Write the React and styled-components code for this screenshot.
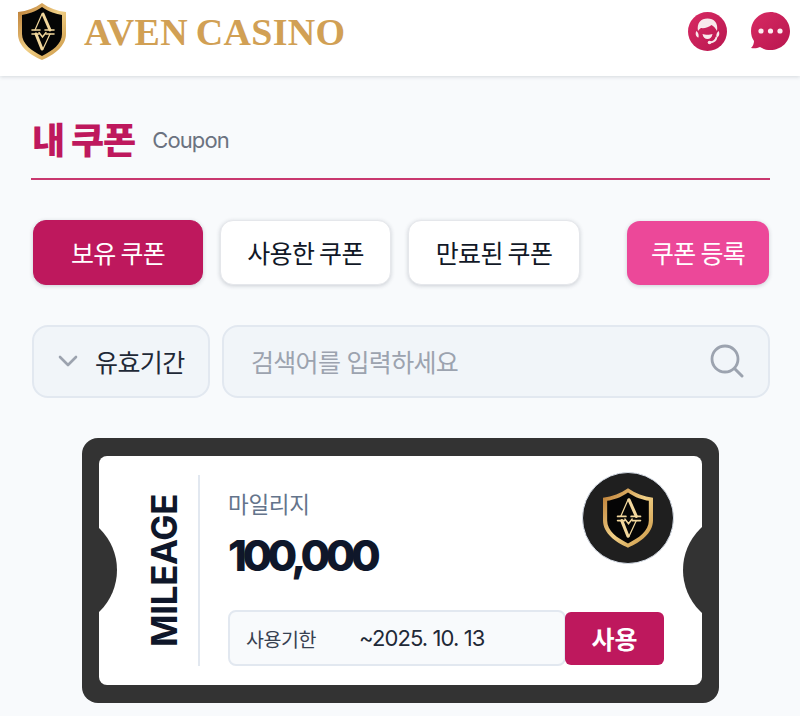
import React from 'react';
import styled, { createGlobalStyle } from 'styled-components';

const GlobalStyle = createGlobalStyle`
  html, body {
    margin: 0;
    padding: 0;
    background: #f8fafc;
    font-family: Inter, "Noto Sans CJK KR", sans-serif;
  }
  * { box-sizing: border-box; }
`;

const Page = styled.div`
  width: 800px;
  height: 716px;
  overflow: hidden;
  background: #f8fafc;
`;

const Header = styled.header`
  height: 76px;
  background: #fff;
  display: flex;
  align-items: center;
  padding: 0 10px 14px 18px;
  box-shadow: 0 1px 4px rgba(30, 41, 59, 0.16);
`;

const Brand = styled.div`
  display: flex;
  align-items: center;
  gap: 18px;
`;

const Wordmark = styled.span`
  font-family: "Liberation Serif", serif;
  font-weight: 700;
  font-size: 38px;
  line-height: 1;
  letter-spacing: 0.3px;
  word-spacing: -2px;
  color: #d1a054;
  padding-top: 2px;
`;

const HeaderActions = styled.div`
  margin-left: auto;
  display: flex;
  align-items: center;
  gap: 24px;
`;

const Main = styled.main`
  padding: 0 30px 0 31px;
`;

const TitleRow = styled.div`
  height: 104px;
  display: flex;
  align-items: flex-end;
  gap: 17px;
  padding: 0 0 14px 1px;
  border-bottom: 2px solid #c9386f;
`;

const Title = styled.h1`
  margin: 0;
  font-size: 36px;
  line-height: 46px;
  font-weight: 800;
  letter-spacing: -1px;
  color: #be185d;
`;

const Subtitle = styled.span`
  font-size: 22px;
  line-height: 48px;
  letter-spacing: -0.9px;
  color: #6b7280;
`;

const Tabs = styled.div`
  display: flex;
  align-items: center;
  gap: 17px;
  margin-top: 40px;
  padding: 0 1px 0 2px;
`;

const Tab = styled.button`
  width: ${(p) => p.$width}px;
  height: 65px;
  border-radius: 13px;
  border: 1px solid ${(p) => (p.$active ? '#be185d' : '#e5e7eb')};
  background: ${(p) => (p.$active ? '#be185d' : '#fff')};
  color: ${(p) => (p.$active ? '#fff' : '#111827')};
  font: 400 25px/1 "Noto Sans CJK KR", sans-serif;
  letter-spacing: -0.7px;
  box-shadow: 0 1px 4px rgba(30, 41, 59, 0.2);
`;

const RegisterButton = styled.button`
  margin-left: auto;
  width: 142px;
  height: 64px;
  border: 0;
  border-radius: 13px;
  background: #ec4899;
  color: #fff;
  font: 400 25px/1 "Noto Sans CJK KR", sans-serif;
  letter-spacing: -0.7px;
  box-shadow: 0 1px 4px rgba(30, 41, 59, 0.2);
`;

const Filters = styled.div`
  display: flex;
  gap: 12px;
  margin-top: 40px;
  padding-left: 1px;
`;

const fieldStyle = `
  height: 73px;
  display: flex;
  align-items: center;
  background: #f1f5f9;
  border: 2px solid #e2e8f0;
  border-radius: 16px;
`;

const PeriodSelect = styled.div`
  ${fieldStyle}
  width: 178px;
  gap: 17px;
  padding: 0 0 2px 24px;
  font-size: 25px;
  letter-spacing: -0.6px;
  color: #1f2937;
`;

const SearchBox = styled.div`
  ${fieldStyle}
  flex: 1;
  justify-content: space-between;
  padding: 0 24px 2px 27px;
  font-size: 25px;
  letter-spacing: -0.7px;
  color: #9ca3af;
`;

const Ticket = styled.section`
  position: relative;
  width: 637px;
  height: 265px;
  margin: 40px 0 0 51px;
  padding: 18px 17px;
  background: #333;
  border-radius: 16px;
`;

const TicketBody = styled.div`
  position: relative;
  height: 229px;
  display: flex;
  padding: 19px 38px 19px 0;
  background: #fff;
  border-radius: 8px;
  overflow: hidden;

  &::before,
  &::after {
    content: '';
    position: absolute;
    top: 56px;
    width: 116px;
    height: 116px;
    border-radius: 50%;
    background: #333;
  }
  &::before { left: -98px; }
  &::after { right: -97px; }
`;

const Side = styled.div`
  width: 101px;
  flex: none;
  display: flex;
  align-items: center;
  justify-content: center;
  padding-left: 32px;
  border-right: 2px solid #e2e8f0;
`;

const SideLabel = styled.span`
  writing-mode: vertical-rl;
  transform: rotate(180deg);
  font-size: 35px;
  line-height: 1;
  font-weight: 700;
  letter-spacing: -0.4px;
  color: #0f172a;
`;

const Content = styled.div`
  flex: 1;
  display: flex;
  flex-direction: column;
  margin-left: 28px;
`;

const TopRow = styled.div`
  flex: 1;
  display: flex;
  justify-content: space-between;
  align-items: flex-start;
`;

const Label = styled.div`
  margin-top: 15px;
  font-size: 22.5px;
  line-height: 30px;
  letter-spacing: -0.3px;
  color: #64748b;
`;

const Amount = styled.div`
  margin-top: 9px;
  font-size: 43px;
  line-height: 52px;
  font-weight: 800;
  letter-spacing: -4.6px;
  color: #0f172a;
`;

const Emblem = styled.div`
  width: 92px;
  height: 92px;
  margin: -3px -10px 0 0;
  display: flex;
  align-items: center;
  justify-content: center;
  border-radius: 50%;
  background: #1f1f1f;
  border: 1px solid #d7dee8;
`;

const UseRow = styled.div`
  display: flex;
  align-items: center;
`;

const Expiry = styled.div`
  flex: 1;
  height: 56px;
  display: flex;
  align-items: center;
  padding-left: 16px;
  background: #f8fafc;
  border: 2px solid #e2e8f0;
  border-radius: 8px;
`;

const ExpiryLabel = styled.span`
  width: 113px;
  font-size: 19.5px;
  letter-spacing: -0.4px;
  color: #374151;
`;

const ExpiryDate = styled.span`
  font-size: 22px;
  letter-spacing: -0.9px;
  color: #1f2937;
`;

const UseButton = styled.button`
  width: 99px;
  height: 53px;
  margin-left: -1px;
  border: 0;
  border-radius: 6px;
  background: #be185d;
  color: #fff;
  font: 700 25px/1 "Noto Sans CJK KR", sans-serif;
`;

const ShieldLogo = ({ id, width, height }) => (
  <svg width={width} height={height} viewBox="0 0 48 57" aria-hidden="true">
    <defs>
      <linearGradient id={id} x1="0" y1="0" x2="1" y2="1">
        <stop offset="0" stopColor="#b9772e" />
        <stop offset="0.5" stopColor="#f0cf86" />
        <stop offset="1" stopColor="#c8923f" />
      </linearGradient>
    </defs>
    <path
      d="M24 0 C31 5 39 8 48 9 V31 C48 43 36 52 24 57 C12 52 0 43 0 31 V9 C9 8 17 5 24 0Z"
      fill={`url(#${id})`}
    />
    <path
      d="M24 4 C31 9 38 11 44 12 V31 C44 41 34 48 24 53 C14 48 4 41 4 31 V12 C10 11 17 9 24 4Z"
      fill="#050505"
    />
    <g fill="none" stroke="#f2d79c" strokeLinecap="round">
      <path strokeWidth="1.2" d="M24 11 L17 27" />
      <path strokeWidth="3" d="M25 11 L32 27" />
      <path strokeWidth="3" d="M18 31 L24 46" />
      <path strokeWidth="1.2" d="M25 46 L32 31" />
      <path strokeWidth="1.6" d="M14 27 H22 M27 27 H36 M14 31 H21 M28 31 H36" />
      <path strokeWidth="1.4" d="M21 29.500 L24.500 34 L28 29.500" />
    </g>
  </svg>
);

const HeadsetIcon = () => (
  <svg width="39" height="39" viewBox="0 0 39 39" aria-hidden="true">
    <defs>
      <linearGradient id="headsetFill" x1="0" y1="0" x2="1" y2="1">
        <stop offset="0" stopColor="#d82a63" />
        <stop offset="1" stopColor="#b8174f" />
      </linearGradient>
    </defs>
    <circle cx="19.500" cy="19.500" r="19.500" fill="url(#headsetFill)" />
    <path d="M10 19 C8.500 11 13 6.500 19.500 6.500 C26 6.500 30.500 11 29 19 C27.500 16 25.500 14 23.500 13 C21 15.500 16 16.500 13 16 C11.500 17 10.800 18 10 19Z" fill="#f8e9ec" />
    <path d="M8.500 19 C7 21 7.500 25 10.500 25.500 C11 23 10.500 21 8.500 19Z M30.500 19 C32 21 31.500 25 28.500 25.500 C28 23 28.500 21 30.500 19Z" fill="#f8e9ec" />
    <path d="M14.500 22 C17 23 22 23 24.500 22 C24 25.500 22 27 19.500 27 C17 27 15 25.500 14.500 22Z" fill="#f8e9ec" />
    <path d="M28.500 25 C28 28.500 26 30 22 30.500" fill="none" stroke="#f8e9ec" strokeWidth="1.800" />
    <circle cx="21.500" cy="30.500" r="1.800" fill="#f8e9ec" />
  </svg>
);

const ChatIcon = () => (
  <svg width="39" height="39" viewBox="0 0 39 39" aria-hidden="true">
    <defs>
      <linearGradient id="chatFill" x1="0" y1="0" x2="1" y2="1">
        <stop offset="0" stopColor="#d82a63" />
        <stop offset="1" stopColor="#b8174f" />
      </linearGradient>
    </defs>
    <path
      d="M19.500 0 C30 0 39 8.500 39 19 C39 30 30 38 19.500 38 C15.500 38 12 37 9 35 C6 36.500 3 36.500 0 36 C2 34 3 31.500 3 29 C1 26 0 23 0 19 C0 8.500 9 0 19.500 0Z"
      fill="url(#chatFill)"
    />
    <circle cx="10" cy="19" r="2.600" fill="#fbeef1" />
    <circle cx="19.500" cy="19" r="2.600" fill="#fbeef1" />
    <circle cx="29" cy="19" r="2.600" fill="#fbeef1" />
  </svg>
);

const ChevronIcon = () => (
  <svg width="20" height="12" viewBox="0 0 20 12" aria-hidden="true">
    <path d="M2 2 L10 10 L18 2" fill="none" stroke="#9ca3af" strokeWidth="2.600" strokeLinecap="round" strokeLinejoin="round" />
  </svg>
);

const SearchIcon = () => (
  <svg width="34" height="34" viewBox="0 0 34 34" aria-hidden="true">
    <circle cx="15" cy="15" r="13" fill="none" stroke="#9ca3af" strokeWidth="2.800" />
    <path d="M25 25 L32 32" stroke="#9ca3af" strokeWidth="3" strokeLinecap="round" />
  </svg>
);

const tabs = [
  { label: '보유 쿠폰', width: 170, active: true },
  { label: '사용한 쿠폰', width: 171 },
  { label: '만료된 쿠폰', width: 172 },
];

const App = () => (
  <Page>
    <GlobalStyle />
    <Header>
      <Brand>
        <ShieldLogo id="brandGold" width={48} height={57} />
        <Wordmark>AVEN CASINO</Wordmark>
      </Brand>
      <HeaderActions>
        <HeadsetIcon />
        <ChatIcon />
      </HeaderActions>
    </Header>
    <Main>
      <TitleRow>
        <Title>내 쿠폰</Title>
        <Subtitle>Coupon</Subtitle>
      </TitleRow>
      <Tabs>
        {tabs.map((tab) => (
          <Tab key={tab.label} $width={tab.width} $active={tab.active}>
            {tab.label}
          </Tab>
        ))}
        <RegisterButton>쿠폰 등록</RegisterButton>
      </Tabs>
      <Filters>
        <PeriodSelect>
          <ChevronIcon />
          유효기간
        </PeriodSelect>
        <SearchBox>
          검색어를 입력하세요
          <SearchIcon />
        </SearchBox>
      </Filters>
      <Ticket>
        <TicketBody>
          <Side>
            <SideLabel>MILEAGE</SideLabel>
          </Side>
          <Content>
            <TopRow>
              <div>
                <Label>마일리지</Label>
                <Amount>100,000</Amount>
              </div>
              <Emblem>
                <ShieldLogo id="emblemGold" width={50} height={60} />
              </Emblem>
            </TopRow>
            <UseRow>
              <Expiry>
                <ExpiryLabel>사용기한</ExpiryLabel>
                <ExpiryDate>~2025. 10. 13</ExpiryDate>
              </Expiry>
              <UseButton>사용</UseButton>
            </UseRow>
          </Content>
        </TicketBody>
      </Ticket>
    </Main>
  </Page>
);

export default App;
